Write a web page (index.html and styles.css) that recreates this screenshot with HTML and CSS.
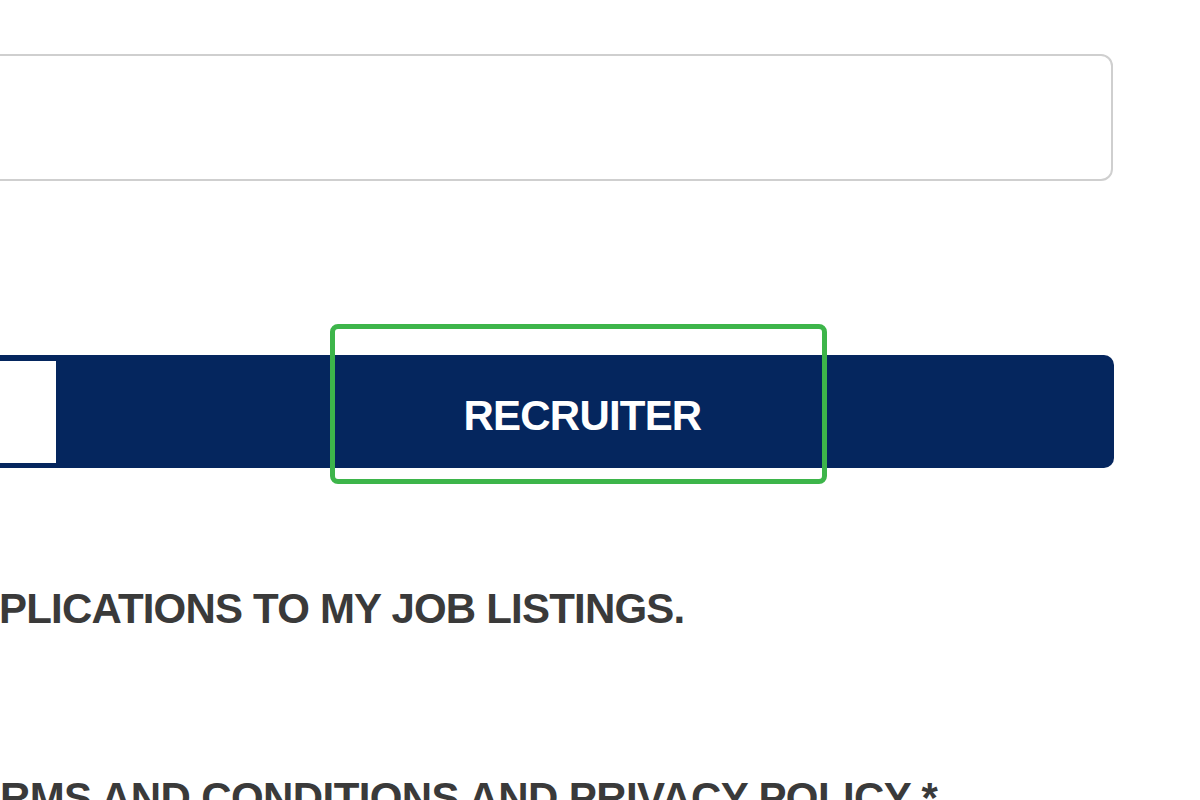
FILE: index.html
```html
<!DOCTYPE html>
<html lang="en">
<head>
<meta charset="utf-8">
<title>Register</title>
<link rel="stylesheet" href="styles.css">
</head>
<body>
<div class="page">
  <div class="field"></div>
  <div class="toggle">
    <div class="opt opt-candidate"></div>
    <div class="opt opt-recruiter">RECRUITER</div>
  </div>
  <p class="label label-apps">PLICATIONS TO MY JOB LISTINGS.</p>
  <p class="label label-terms">RMS AND CONDITIONS AND PRIVACY POLICY *</p>
  <div class="highlight"></div>
</div>
</body>
</html>
```
FILE: styles.css
```css
html, body {
  margin: 0;
  padding: 0;
  background: #ffffff;
}
.page {
  position: relative;
  width: 1200px;
  height: 800px;
  overflow: hidden;
  padding-top: 54px;
  box-sizing: border-box;
  font-family: "Liberation Sans", Arial, sans-serif;
}
.field {
  margin-left: -20px;
  width: 1133px;
  height: 127px;
  border: 2px solid #cfcfcf;
  border-radius: 12px;
  box-sizing: border-box;
}
.toggle {
  display: flex;
  margin-top: 174px;
  margin-left: -20px;
  width: 1134px;
  height: 113px;
  padding: 6px 5px 5px 5px;
  box-sizing: border-box;
  background: #05265e;
  border-radius: 10px;
}
.opt-candidate {
  width: 71px;
  background: #ffffff;
}
.opt-recruiter {
  flex: 1;
  display: flex;
  align-items: center;
  justify-content: center;
  padding-top: 7px;
  box-sizing: border-box;
  color: #ffffff;
  font-weight: bold;
  font-size: 42px;
  line-height: 1;
  letter-spacing: -0.8px;
}
.label {
  margin: 0;
  color: #3a3a3a;
  font-weight: bold;
  font-size: 42px;
  line-height: 1;
  white-space: nowrap;
}
.label-apps {
  margin-top: 120px;
  margin-left: -1px;
  letter-spacing: -0.8px;
}
.label-terms {
  margin-top: 147px;
  margin-left: 0;
  letter-spacing: -0.6px;
}
.highlight {
  position: absolute;
  left: 330px;
  top: 324px;
  width: 497px;
  height: 160px;
  border: 5px solid #3db54a;
  border-radius: 8px;
  box-sizing: border-box;
}
```
